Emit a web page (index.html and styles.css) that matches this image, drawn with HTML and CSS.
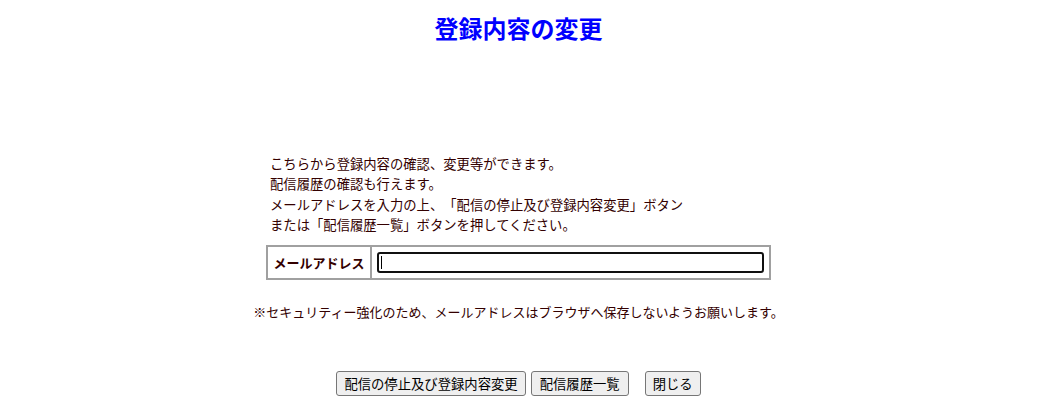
FILE: index.html
```html
<!DOCTYPE html>
<html lang="ja">
<head>
<meta charset="utf-8">
<title>登録内容の変更</title>
<link rel="stylesheet" href="styles.css">
</head>
<body>
<div class="page">
  <h1 class="title">登録内容の変更</h1>
  <div class="panel">
    <div class="intro">
      <p>こちらから登録内容の確認、変更等ができます。</p>
      <p>配信履歴の確認も行えます。</p>
      <p>メールアドレスを入力の上、「配信の停止及び登録内容変更」ボタン</p>
      <p>または「配信履歴一覧」ボタンを押してください。</p>
    </div>
    <table class="form-table">
      <tr>
        <th class="label">メールアドレス</th>
        <td class="field">
          <span class="input-wrap">
            <input class="mail-input" type="text" name="mail">
            <span class="caret"></span>
          </span>
        </td>
      </tr>
    </table>
  </div>
  <p class="note">※セキュリティー強化のため、メールアドレスはブラウザへ保存しないようお願いします。</p>
  <div class="buttons">
    <button class="btn btn-change" type="button">配信の停止及び登録内容変更</button>
    <button class="btn btn-history" type="button">配信履歴一覧</button>
    <button class="btn btn-close" type="button">閉じる</button>
  </div>
</div>
</body>
</html>
```
FILE: styles.css
```css
html, body {
  margin: 0;
  padding: 0;
  background: #ffffff;
}

body {
  font-family: "Noto Sans CJK JP", "Noto Sans", sans-serif;
  font-size: 13.33px;
  color: #330000;
  text-spacing-trim: space-all;
}

.page {
  display: flex;
  flex-direction: column;
  align-items: center;
}

.title {
  margin: 13px 0 0;
  font-size: 24px;
  line-height: 29px;
  font-weight: bold;
  color: #0000ff;
}

.panel {
  width: 505px;
  margin-top: 112px;
  display: flex;
  flex-direction: column;
}

.intro {
  padding-left: 4px;
}

.intro p {
  margin: 0;
  line-height: 20.3px;
}

.form-table {
  margin-top: 10px;
  width: 505px;
  height: 35px;
  border-collapse: collapse;
  border: 2px solid #a0a0a0;
}

.form-table th,
.form-table td {
  border: 2px solid #a0a0a0;
  padding: 0;
}

.label {
  width: 102px;
  font-size: 13px;
  font-weight: bold;
  text-align: center;
  white-space: nowrap;
  line-height: 20px;
  color: #330000;
}

.field {
  padding: 0 4px 0 5px !important;
}

.input-wrap {
  position: relative;
  display: block;
}

.mail-input {
  display: block;
  box-sizing: border-box;
  width: 387px;
  height: 21px;
  margin: 0;
  padding: 0 3px;
  border: 2px solid #101010;
  border-radius: 3px;
  outline: none;
  background: #ffffff;
  font-family: inherit;
  font-size: 13px;
}

.caret {
  position: absolute;
  left: 4px;
  top: 4px;
  width: 1px;
  height: 13px;
  background: #000000;
}

.note {
  margin: 22px 0 0;
  font-size: 13px;
  line-height: 20px;
  white-space: nowrap;
}

.buttons {
  margin-top: 49px;
  display: flex;
  align-items: center;
}

.btn {
  box-sizing: border-box;
  height: 25px;
  padding: 0 7px;
  background: #efefef;
  border: 1px solid #767676;
  border-radius: 3px;
  font-family: inherit;
  font-size: 13.33px;
  color: #000000;
  line-height: 21px;
}

.btn-history {
  margin-left: 5px;
  padding: 0 8px;
}

.btn-close {
  margin-left: 16px;
  padding: 0 7px;
}
```
